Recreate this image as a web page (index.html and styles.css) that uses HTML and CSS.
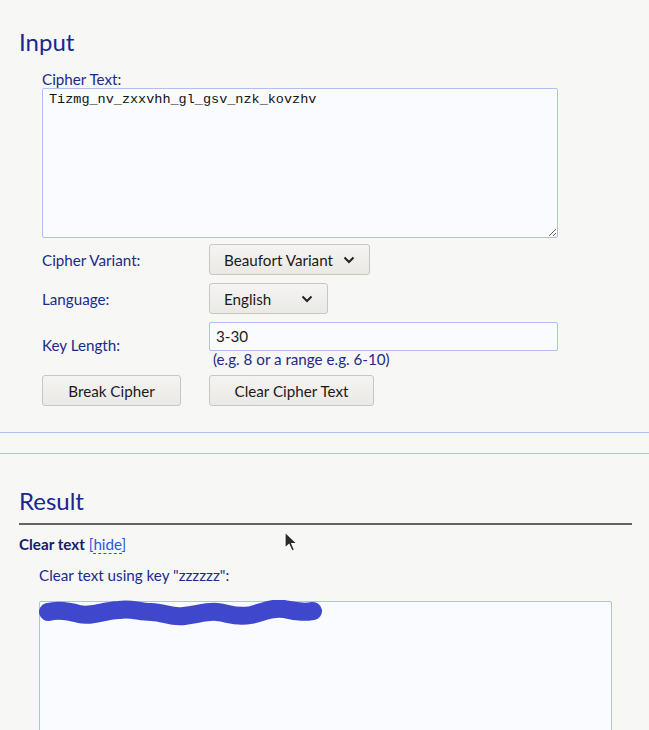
FILE: index.html
```html
<!DOCTYPE html>
<html>
<head>
<meta charset="utf-8">
<link rel="stylesheet" href="styles.css">
</head>
<body>
<section class="panel panel-input">
  <h2 class="title">Input</h2>
  <div class="form">
    <label class="lbl-top">Cipher Text:</label>
    <textarea class="cipher" spellcheck="false">Tizmg_nv_zxxvhh_gl_gsv_nzk_kovzhv</textarea>
    <div class="grid">
      <span class="lbl">Cipher Variant:</span>
      <div class="sel sel-variant"><span>Beaufort Variant</span><svg class="chev" width="12" height="8" viewBox="0 0 12 8"><path d="M1.5 1.5 L6 6 L10.5 1.5" fill="none" stroke="#222" stroke-width="2"/></svg></div>
      <span class="lbl">Language:</span>
      <div class="sel sel-lang"><span>English</span><svg class="chev" width="12" height="8" viewBox="0 0 12 8"><path d="M1.5 1.5 L6 6 L10.5 1.5" fill="none" stroke="#222" stroke-width="2"/></svg></div>
      <span class="lbl lbl-key">Key Length:</span>
      <div class="keybox">
        <div class="keyinput">3-30</div>
        <div class="hint">(e.g. 8 or a range e.g. 6-10)</div>
      </div>
      <div class="btn btn-break">Break Cipher</div>
      <div class="btn btn-clear">Clear Cipher Text</div>
    </div>
  </div>
</section>
<section class="panel panel-result">
  <h2 class="title">Result</h2>
  <hr class="rule">
  <div class="sub"><b>Clear text</b> <a class="hide">[<span>hide</span>]</a></div>
  <div class="resbody">
    <div class="lbl-res">Clear text using key "zzzzzz":</div>
    <div class="restext">
      <svg class="scribble" width="290" height="30" viewBox="0 0 290 30"><path d="M9 12 C 20 9, 30 11, 40 14 C 52 17, 62 11, 80 10 C 92 8, 100 12, 112 12 C 125 12, 132 18, 145 16 C 160 14, 168 11, 178 12 C 190 13, 195 18, 212 15 C 222 13, 232 7, 245 9 C 255 11, 262 13, 274 11" fill="none" stroke="#3f48cc" stroke-width="18" stroke-linecap="round" stroke-linejoin="round"/></svg>
    </div>
  </div>
  <svg class="cursor" width="16" height="22" viewBox="0 0 16 22"><path d="M2 1 L2 17 L6 13.5 L9 20 L11.5 19 L8.8 12.6 L14 12.6 Z" fill="#2b2b2b" stroke="#fff" stroke-width="1.2"/></svg>
</section>
</body>
</html>
```

FILE: styles.css
```css
* { box-sizing: border-box; }
html, body { margin: 0; padding: 0; }
body {
  background: #f7f7f6;
  font-family: "Lato", "Noto Sans", sans-serif;
  font-size: 15.2px;
  color: #1c2a8a;
  width: 649px;
  height: 730px;
  overflow: hidden;
  position: relative;
}
.panel {
  margin-left: -4px;
  margin-right: -8px;
  border: 1px solid #aebff0;
  border-radius: 4px;
  padding-left: 22px;
  position: relative;
}
.panel-input {
  border-top: none;
  border-radius: 0 0 4px 4px;
  height: 433px;
  padding-top: 28px;
}
.panel-result {
  margin-top: 20px;
  border-bottom: none;
  border-radius: 4px 4px 0 0;
  padding-top: 33px;
  height: 300px;
}
.title {
  margin: 0;
  font-weight: 400;
  font-size: 24px;
  line-height: 28px;
  color: #1a2790;
}
.form { padding-left: 23px; padding-top: 14px; }
.lbl-top { display: block; line-height: 18px; height: 18px; }
.cipher {
  display: block;
  width: 516px;
  height: 150px;
  margin: 0;
  border: 1px solid #aebff0;
  border-radius: 2px;
  background: #fafbff;
  font-family: "Liberation Mono", monospace;
  font-size: 13.5px;
  color: #111;
  padding: 3px 6px;
  resize: both;
  outline: none;
}
.grid {
  display: grid;
  grid-template-columns: 167px auto;
  justify-items: start;
  align-items: center;
  row-gap: 8px;
  margin-top: 6px;
}
.lbl { line-height: 18px; }
.sel {
  height: 31px;
  border: 1px solid #c9c5bf;
  border-radius: 3px;
  background: linear-gradient(#f5f4f2, #ebe9e6);
  color: #1a1a1a;
  display: flex;
  align-items: center;
  padding-left: 14px;
  white-space: nowrap;
}
.sel-variant { width: 161px; }
.sel-lang { width: 119px; }
.chev { margin-left: auto; margin-right: 14px; flex: none; }
.keybox { width: 349px; margin-top: 0; }
.keyinput {
  height: 29px;
  border: 1px solid #aebff0;
  border-radius: 2px;
  background: #fafbff;
  color: #1a1a1a;
  padding-left: 6px;
  line-height: 27px;
}
.hint { padding-left: 4px; line-height: 17px; margin-top: 0; }
.btn {
  height: 31px;
  border: 1px solid #c9c5bf;
  border-radius: 3px;
  background: linear-gradient(#f5f4f2, #ebe9e6);
  color: #1a1a1a;
  display: flex;
  align-items: center;
  justify-content: center;
  margin-top: -1px;
}
.btn-break { width: 139px; }
.btn-clear { width: 165px; }
.rule {
  margin: 8px 0 0 0;
  width: 613px;
  border: none;
  height: 2px;
  background: #646464;
}
.sub { margin-top: 9px; line-height: 20px; }
.sub b { color: #13206e; }
.hide { color: #2c58d8; }
.hide span { border-bottom: 1px dashed #2c58d8; }
.resbody { padding-left: 20px; margin-top: 12px; }
.lbl-res { line-height: 18px; }
.restext {
  margin-top: 17px;
  width: 573px;
  height: 140px;
  border: 1px solid #aebff0;
  border-radius: 2px;
  background: #fafbff;
  position: relative;
}
.scribble { position: absolute; left: -1px; top: -2px; }
.cursor { position: absolute; left: 286px; top: 77px; }
```
